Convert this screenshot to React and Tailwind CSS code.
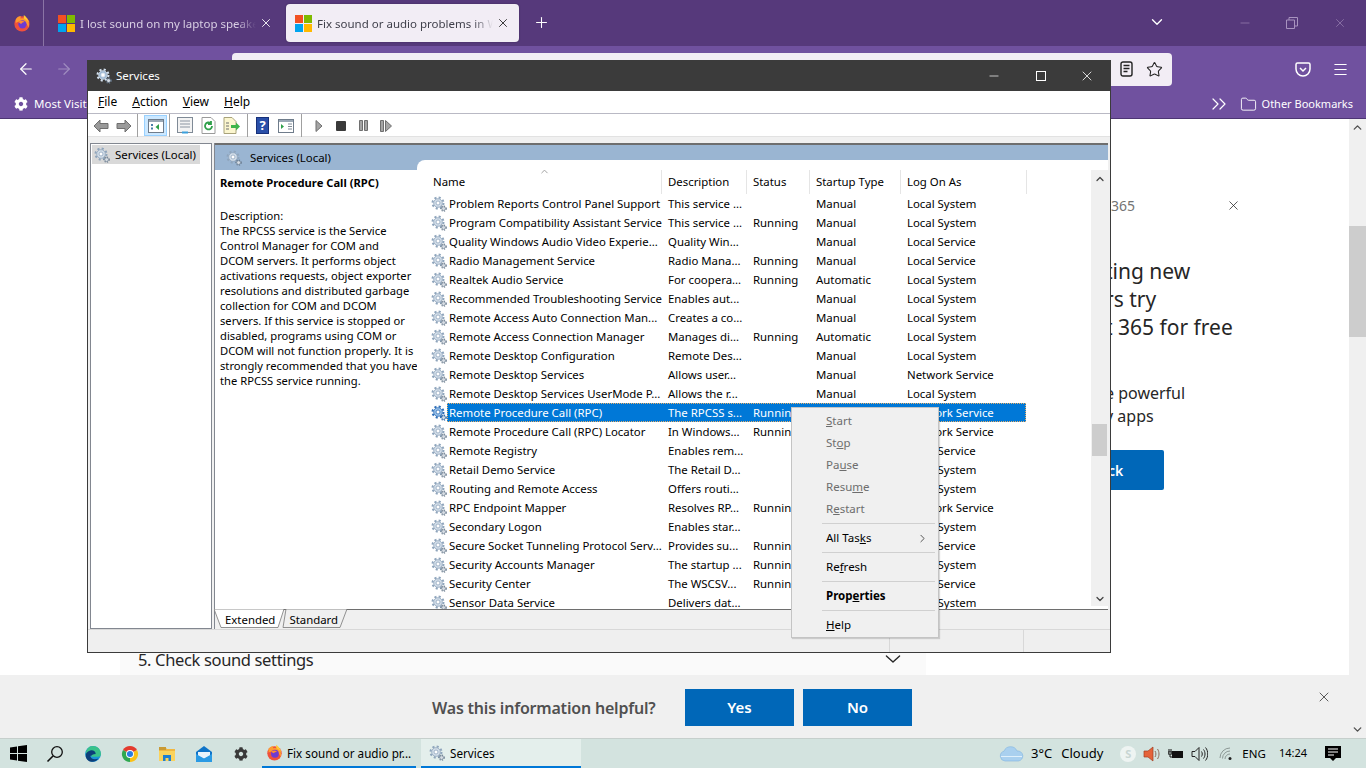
import React from "react";
import { ArrowLeft, ArrowRight, ChevronDown, ChevronRight, ChevronUp, ChevronsRight, Folder, Menu, Minus, Plus, Star, X } from "lucide-react";
import { FaCog } from "react-icons/fa";

// name, description, status, startup type, log on as
const services = [
  ["Problem Reports Control Panel Support", "This service ...", "", "Manual", "Local System"],
  ["Program Compatibility Assistant Service", "This service ...", "Running", "Manual", "Local System"],
  ["Quality Windows Audio Video Experie...", "Quality Win...", "", "Manual", "Local Service"],
  ["Radio Management Service", "Radio Mana...", "Running", "Manual", "Local Service"],
  ["Realtek Audio Service", "For coopera...", "Running", "Automatic", "Local System"],
  ["Recommended Troubleshooting Service", "Enables aut...", "", "Manual", "Local System"],
  ["Remote Access Auto Connection Man...", "Creates a co...", "", "Manual", "Local System"],
  ["Remote Access Connection Manager", "Manages di...", "Running", "Automatic", "Local System"],
  ["Remote Desktop Configuration", "Remote Des...", "", "Manual", "Local System"],
  ["Remote Desktop Services", "Allows user...", "", "Manual", "Network Service"],
  ["Remote Desktop Services UserMode P...", "Allows the r...", "", "Manual", "Local System"],
  ["Remote Procedure Call (RPC)", "The RPCSS s...", "Running", "Automatic", "Network Service"],
  ["Remote Procedure Call (RPC) Locator", "In Windows...", "Running", "Manual", "Network Service"],
  ["Remote Registry", "Enables rem...", "", "Disabled", "Local Service"],
  ["Retail Demo Service", "The Retail D...", "", "Manual", "Local System"],
  ["Routing and Remote Access", "Offers routi...", "", "Disabled", "Local System"],
  ["RPC Endpoint Mapper", "Resolves RP...", "Running", "Automatic", "Network Service"],
  ["Secondary Logon", "Enables star...", "", "Manual", "Local System"],
  ["Secure Socket Tunneling Protocol Serv...", "Provides su...", "Running", "Manual", "Local Service"],
  ["Security Accounts Manager", "The startup ...", "Running", "Automatic", "Local System"],
  ["Security Center", "The WSCSV...", "Running", "Automatic", "Local Service"],
  ["Sensor Data Service", "Delivers dat...", "", "Manual", "Local System"],
];

const description = [
  "The RPCSS service is the Service",
  "Control Manager for COM and",
  "DCOM servers. It performs object",
  "activations requests, object exporter",
  "resolutions and distributed garbage",
  "collection for COM and DCOM",
  "servers. If this service is stopped or",
  "disabled, programs using COM or",
  "DCOM will not function properly. It is",
  "strongly recommended that you have",
  "the RPCSS service running.",
];

const MsLogo = () => (
  <svg width="17" height="17" viewBox="0 0 17 17" className="shrink-0">
    <rect width="8" height="8" fill="#f25022" />
    <rect x="9" width="8" height="8" fill="#7fba00" />
    <rect y="9" width="8" height="8" fill="#00a4ef" />
    <rect x="9" y="9" width="8" height="8" fill="#ffb900" />
  </svg>
);

const FirefoxIcon = ({ size = 18 }) => (
  <svg width={size} height={size} viewBox="0 0 20 20" className="shrink-0">
    <circle cx="10" cy="11" r="8.5" fill="#f0503c" />
    <path d="M3 6C5 3 7 2 9 3c-1 1-1 2 0 2 3-1 7 1 8 4 1 2 1 4 0 6C15 8 9 7 3 10z" fill="#ff9a2e" />
    <path d="M12 1c3 2 5 5 6 9-2-3-4-4-6-5z" fill="#ffcb33" />
    <circle cx="10.5" cy="11.5" r="4.6" fill="#6d3bd1" />
    <path d="M6 9c2-2 5-2 7 0-2 0-3 1-4 2z" fill="#ff8a30" />
  </svg>
);

const ChromeIcon = () => (
  <svg width="18" height="18" viewBox="0 0 20 20">
    <path d="M10 10L2.21 5.5A9 9 0 0 1 17.79 5.5Z" fill="#e33b2e" />
    <path d="M10 10L17.79 5.5A9 9 0 0 1 10 19Z" fill="#fbc116" />
    <path d="M10 10L10 19A9 9 0 0 1 2.21 5.5Z" fill="#2fa84f" />
    <circle cx="10" cy="10" r="4.4" fill="#fff" />
    <circle cx="10" cy="10" r="3.4" fill="#2a7de1" />
  </svg>
);

const EdgeIcon = () => (
  <svg width="18" height="18" viewBox="0 0 20 20">
    <circle cx="10" cy="10" r="8.8" fill="#1a94d8" />
    <path d="M2 12C2 6 7 4 11 5c4 1 6 4 5 7H7c0 3 4 5 9 3-2 3-5 4-8 3.600C4 18 2 15 2 12z" fill="#0c3f7a" />
    <path d="M10 1.200c5 0 8.800 4 8.800 8.800 0 2-1 3-3 3H8c0-2 2-3 5-3 0-3-3-5-6-4C5 6.500 3 8 2 10 2 5 5.500 1.200 10 1.200z" fill="#39c28a" />
  </svg>
);

const ExplorerIcon = () => (
  <svg width="18" height="18" viewBox="0 0 18 18">
    <path d="M1 2h6l2 2h8v12H1z" fill="#f2b73f" />
    <rect x="1" y="2" width="7" height="3" fill="#c99a35" />
    <rect x="1" y="6" width="16" height="10" fill="#fbd35c" />
    <path d="M5 10h8v6h-2.500v-3h-3v3H5z" fill="#1f7fd1" />
  </svg>
);

const MailIcon = () => (
  <svg width="18" height="18" viewBox="0 0 18 18">
    <path d="M1 7l8-6 8 6v10H1z" fill="#0f74c8" />
    <path d="M3 7h12v4l-6 3-6-3z" fill="#eaf4fb" />
    <path d="M1 9l8 4.500L17 9v8H1z" fill="#2a9ae4" />
  </svg>
);

const WinLogo = () => (
  <svg width="17" height="17" viewBox="0 0 17 17">
    <path d="M0 2.500l7-1v6.500H0zM8 1.300L17 0v8H8zM0 9h7v6.500l-7-1zM8 9h9v8l-9-1.300z" fill="#000" />
  </svg>
);

const SearchIcon = () => (
  <svg width="18" height="18" viewBox="0 0 18 18" fill="none" stroke="#111" strokeWidth="1.300">
    <circle cx="11" cy="7" r="5.300" />
    <path d="M7 11l-5.500 5.500" strokeWidth="1.600" />
  </svg>
);

// the two blue gears that mmc uses for services
const GearIcon = ({ size = 16, selected = false, light = false }) => {
  const edge = selected ? "#2f6fb8" : light ? "#d5e2ef" : "#8fa5bc";
  const fill = selected ? "#9cc3ea" : light ? "#9fb9d3" : "#d3dee9";
  const small = selected ? "#1f5c9e" : "#66788c";
  return (
    <svg width={size} height={size} viewBox="0 0 16 16" className="shrink-0">
      <circle cx="7" cy="7" r="5.500" fill="none" stroke={edge} strokeWidth="2" strokeDasharray="2.100 2.220" />
      <circle cx="7" cy="7" r="4.300" fill={fill} stroke={edge} strokeWidth="0.800" />
      <circle cx="7" cy="7" r="2" fill="#fff" stroke={edge} strokeWidth="0.800" />
      <circle cx="12.600" cy="12.600" r="2.600" fill="none" stroke={small} strokeWidth="1.200" strokeDasharray="1.200 1.250" />
      <circle cx="12.600" cy="12.600" r="1.900" fill="#d7dde4" stroke={small} strokeWidth="0.600" />
    </svg>
  );
};

const ToolSep = () => <div className="w-px h-[24px] bg-[#a0a0a0] shrink-0" />;

const NavArrow = ({ flip }) => (
  <svg width="16" height="14" viewBox="0 0 16 14" className={flip ? "scale-x-[-1]" : ""}>
    <path d="M7 1L1 7l6 6V9.500h8v-5H7z" fill="#9a9a9a" stroke="#6f6f6f" strokeWidth="1" />
  </svg>
);

const ConsoleTree = () => (
  <svg width="16" height="14" viewBox="0 0 16 14">
    <rect x="0.500" y="0.500" width="15" height="13" fill="#fff" stroke="#6f7c8b" />
    <rect x="1" y="1" width="14" height="2" fill="#9aa8b6" />
    <path d="M3 5h2v2H3zM3 8.500h2v2H3z" fill="#4a7ea8" />
    <path d="M11 5v6L7.500 8z" fill="#2fa04a" />
  </svg>
);

const Toolbar = () => (
  <div className="h-[21px] flex items-center pt-[1px] border-b border-[#e2e2e2] bg-white box-content">
    <div className="flex items-center pl-[5px] gap-[7px] w-[49px]">
      <NavArrow />
      <NavArrow flip />
    </div>
    <ToolSep />
    <div className="ml-[6px] w-[23px] h-[21px] bg-[#cce8ff] border border-[#99d1ff] flex items-center justify-center">
      <ConsoleTree />
    </div>
    <div className="ml-[2px]"><ToolSep /></div>
    <svg width="16" height="17" viewBox="0 0 16 17" className="ml-[7px]">
      <rect x="0.500" y="0.500" width="15" height="15" fill="#f3f3f3" stroke="#7f8a96" />
      <path d="M3 4h10M3 7h10M3 10h10" stroke="#8b95a1" />
      <rect x="5" y="14.500" width="6" height="2" fill="#3ba0dc" />
    </svg>
    <svg width="15" height="17" viewBox="0 0 15 17" className="ml-[8px]">
      <path d="M1 .5h9l4 4v12H1z" fill="#fff" stroke="#9a9a9a" />
      <path d="M11 9a3.500 3.500 0 1 1-1.200-2.700M10 4v3h-3" fill="none" stroke="#2fa04a" strokeWidth="1.800" />
    </svg>
    <svg width="18" height="17" viewBox="0 0 18 17" className="ml-[7px]">
      <path d="M1 .5h8l4 4v12H1z" fill="#fbf6cf" stroke="#a8a27a" />
      <path d="M3 6h3M3 9h3M3 12h3" stroke="#6f6f6f" />
      <path d="M8 8h5V5.500l4 4-4 4V11H8z" fill="#3fb54a" />
    </svg>
    <div className="ml-[6px]"><ToolSep /></div>
    <div className="ml-[8px] w-[13px] h-[17px] bg-[#2a4fa8] border border-[#16307a] text-white text-[13px] font-bold leading-[15px] text-center">?</div>
    <svg width="16" height="14" viewBox="0 0 16 14" className="ml-[9px]">
      <rect x="0.500" y="0.500" width="15" height="13" fill="#fff" stroke="#6f7c8b" />
      <rect x="1" y="1" width="14" height="2" fill="#9aa8b6" />
      <path d="M3 5l3 2.500L3 10z" fill="#2fa04a" />
      <path d="M10 5h4M10 7.500h4M10 10h4" stroke="#7f8a96" />
    </svg>
    <div className="ml-[7px]"><ToolSep /></div>
    <svg width="8" height="12" viewBox="0 0 8 12" className="ml-[13px]">
      <path d="M1 .5v11L7 6z" fill="#a5a5a5" stroke="#6f6f6f" />
    </svg>
    <div className="ml-[13px] w-[10px] h-[10px] bg-[#3a3a3a] rounded-[1px]" />
    <svg width="9" height="11" viewBox="0 0 9 11" className="ml-[13px]">
      <path d="M.5.500h3v10h-3zM5.500.500h3v10h-3z" fill="#a5a5a5" stroke="#6f6f6f" />
    </svg>
    <svg width="12" height="12" viewBox="0 0 12 12" className="ml-[12px]">
      <path d="M.5.500h3v11h-3zM5.500.500v11L11.500 6z" fill="#a5a5a5" stroke="#6f6f6f" />
    </svg>
  </div>
);

const ServiceRow = ({ row, selected }) => (
  <div className="h-[19px] flex items-center pl-[14px] whitespace-nowrap text-[11.400px]">
    <GearIcon selected={selected} />
    <div
      className={
        selected
          ? "w-[579px] h-[19px] flex items-center bg-[#0078d7] text-white outline-1 outline-dotted outline-[#e8b06a] -outline-offset-1"
          : "w-[579px] h-[19px] flex items-center"
      }
    >
      <div className="w-[221px] pl-[2px]">{row[0]}</div>
      <div className="w-[85px]">{row[1]}</div>
      <div className="w-[63px]">{row[2]}</div>
      <div className="w-[91px]">{row[3]}</div>
      <div>{row[4]}</div>
    </div>
  </div>
);

const MenuItem = ({ children, disabled, bold, arrow }) => (
  <div
    className={`h-[22px] flex items-center justify-between pl-[34px] pr-[9px] text-[11.500px] ${disabled ? "text-[#6d6d6d]" : "text-black"} ${bold ? "font-bold" : ""}`}
  >
    <span>{children}</span>
    {arrow && <ChevronRight size={13} strokeWidth={1.500} className="text-[#333]" />}
  </div>
);

const MenuSep = () => <div className="h-px my-[3px] ml-[30px] mr-[3px] bg-[#d0d0d0]" />;

const ContextMenu = () => (
  <div className="absolute left-[791px] top-[407px] w-[148px] h-[231px] bg-[#f0f0f0] border border-[#c4c4c4] pt-[2px] shadow-[1px_1px_1px_rgba(0,0,0,0.15)]">
    <MenuItem disabled><u>S</u>tart</MenuItem>
    <MenuItem disabled>St<u>o</u>p</MenuItem>
    <MenuItem disabled>Pa<u>u</u>se</MenuItem>
    <MenuItem disabled>Resu<u>m</u>e</MenuItem>
    <MenuItem disabled>R<u>e</u>start</MenuItem>
    <MenuSep />
    <MenuItem arrow>All Tas<u>k</u>s</MenuItem>
    <MenuSep />
    <MenuItem>Re<u>f</u>resh</MenuItem>
    <MenuSep />
    <MenuItem bold>Prop<u>e</u>rties</MenuItem>
    <MenuSep />
    <MenuItem><u>H</u>elp</MenuItem>
  </div>
);

const ServicesWindow = () => (
  <div className="absolute left-[87px] top-[60px] w-[1024px] h-[593px] flex flex-col border border-[#3b3b3b] bg-white text-black">
    <div className="h-[30px] shrink-0 bg-[#3b3b3b] flex items-center text-white">
      <div className="ml-[8px]"><GearIcon light /></div>
      <span className="ml-[4px] text-[11.500px]">Services</span>
      <div className="ml-auto flex items-center">
        <Minus size={14} strokeWidth={1.200} className="mr-[35px]" />
        <div className="w-[10px] h-[10px] border border-white mr-[33px]" />
        <X size={16} strokeWidth={1.200} className="mr-[15px]" />
      </div>
    </div>
    <div className="h-[23px] shrink-0 flex items-center gap-[15px] pl-[10px] text-[12px] border-b border-[#b9b9c4]">
      <span><u>F</u>ile</span>
      <span><u>A</u>ction</span>
      <span><u>V</u>iew</span>
      <span><u>H</u>elp</span>
    </div>
    <Toolbar />
    <div className="flex-1 min-h-0 flex gap-[2px] pl-[2px] pr-[2px] pt-[6px] bg-[#f0f0f0]">
      <div className="w-[122px] shrink-0 border border-[#828790] bg-white p-px">
        <div className="w-[108px] h-[19px] bg-[#d9d9d9] flex items-center pl-[2px] gap-[5px] text-[11.400px] whitespace-nowrap">
          <GearIcon />
          <span>Services (Local)</span>
        </div>
      </div>
      <div className="flex-1 min-w-0 flex flex-col border-l border-[#828790]">
        <div className="flex-1 min-h-0 flex bg-[#9ab5d2] border-t-2 border-[#6e6e6e]">
          <div className="w-[202px] shrink-0 flex flex-col">
            <div className="h-[25px] shrink-0 flex items-center pl-[11px] gap-[8px] text-[11.400px] whitespace-nowrap">
              <GearIcon />
              <span>Services (Local)</span>
            </div>
            <div className="flex-1 bg-white pl-[5px] text-[11.200px] leading-[15px] whitespace-nowrap overflow-hidden">
              <div className="font-bold pt-[5px]">Remote Procedure Call (RPC)</div>
              <div className="mt-[18px]">Description:</div>
              {description.map((line) => (
                <div key={line}>{line}</div>
              ))}
            </div>
          </div>
          <div className="flex-1 min-w-0 mt-[15px] flex bg-white rounded-tl-[8px] pt-[10px]">
            <div className="flex-1 min-w-0 flex flex-col overflow-hidden">
              <div className="relative h-[24px] shrink-0 flex text-[11.400px] whitespace-nowrap">
                <ChevronUp size={11} strokeWidth={1.200} className="absolute left-[122px] -top-[4px] text-[#555]" />
                <div className="w-[245px] pl-[16px] flex items-center border-r border-[#e5e5e5]">Name</div>
                <div className="w-[85px] pl-[6px] flex items-center border-r border-[#e5e5e5]">Description</div>
                <div className="w-[63px] pl-[6px] flex items-center border-r border-[#e5e5e5]">Status</div>
                <div className="w-[91px] pl-[6px] flex items-center border-r border-[#e5e5e5]">Startup Type</div>
                <div className="w-[126px] pl-[6px] flex items-center border-r border-[#e5e5e5]">Log On As</div>
              </div>
              {services.map((row, i) => (
                <ServiceRow key={row[0]} row={row} selected={i === 11} />
              ))}
            </div>
            <div className="w-[17px] shrink-0 bg-[#f0f0f0] mb-[3px] flex flex-col items-center text-[#444]">
              <ChevronUp size={12} strokeWidth={2.500} className="mt-[3px]" />
              <div className="w-[15px] h-[32px] mt-[239px] bg-[#cdcdcd]" />
              <ChevronDown size={12} strokeWidth={2.500} className="mt-auto mb-[1px]" />
            </div>
          </div>
        </div>
        <div className="relative h-[19px] shrink-0 flex items-center text-[11.400px] border-t border-[#6e6e6e] box-content">
          <svg width="140" height="20" viewBox="0 0 140 20" className="absolute left-[-1px] -top-px">
            <path d="M72 0L69 18.500H126L133 0z" fill="#f0f0f0" stroke="#777" strokeWidth="0.800" />
            <path d="M0 0l7 18.500h57L70 0z" fill="#fff" stroke="#777" strokeWidth="0.800" />
          </svg>
          <span className="relative ml-[10px]">Extended</span>
          <span className="relative ml-[14px]">Standard</span>
        </div>
      </div>
    </div>
    <div className="h-[23px] shrink-0 bg-[#efefef] border-t border-[#d8d8d8] flex justify-end">
      <div className="w-[134px] border-l border-[#d8d8d8]" />
      <div className="w-[87px] border-l border-[#d8d8d8]" />
    </div>
  </div>
);

const Tab = ({ title, active }) => (
  <div
    className={
      active
        ? "w-[233px] h-[38px] mt-[4px] ml-[10px] rounded-[4px] bg-[#f2edf5] text-[#3f3f4a] flex items-center pl-[9px] pr-[9px] shadow-[0_0_2px_rgba(0,0,0,0.3)]"
        : "w-[231px] h-[38px] mt-[4px] text-[#d9cfe4] flex items-center pl-[13px] pr-[3px]"
    }
  >
    <MsLogo />
    <div className="ml-[5px] pt-[1px] flex-1 min-w-0 overflow-hidden whitespace-nowrap text-[11.500px] [mask-image:linear-gradient(to_left,transparent,black_20px)]">{title}</div>
    <X size={14} strokeWidth={1.500} className={active ? "ml-[3px] text-[#222]" : "ml-[3px] text-white"} />
  </div>
);

const Taskbar = () => (
  <div className="h-[30px] shrink-0 bg-[#d3e3df] border-t border-[#c6cfcc] flex items-center text-black text-[11.700px]">
    <div className="w-[262px] shrink-0 flex items-center pl-[10px]">
      <WinLogo />
      <div className="ml-[19px]"><SearchIcon /></div>
      <div className="ml-[20px]"><EdgeIcon /></div>
      <div className="ml-[19px]"><ChromeIcon /></div>
      <div className="ml-[19px]"><ExplorerIcon /></div>
      <div className="ml-[19px]"><MailIcon /></div>
      <FaCog size={14} className="ml-[21px] text-[#3a3a3a]" />
    </div>
    <div className="w-[154px] h-[29px] shrink-0 border-b-2 border-[#0078d7] flex items-center pl-[4px] gap-[3px] whitespace-nowrap">
      <FirefoxIcon size={17} />
      <span className="ml-[1px] pt-[2px]">Fix sound or audio pr...</span>
    </div>
    <div className="ml-[5px] w-[160px] h-[29px] shrink-0 bg-[#e4efec] border-b-2 border-[#0078d7] flex items-center pl-[8px] gap-[5px]">
      <GearIcon />
      <span className="pt-[2px]">Services</span>
    </div>
    <div className="ml-auto flex items-center">
      <svg width="25" height="17" viewBox="0 0 25 17">
        <path d="M6 16a5 5 0 0 1-1-9.800A7 7 0 0 1 18 6a5 5 0 0 1 1.500 10z" fill="#a9d0ef" stroke="#7fb4e0" strokeWidth="0.600" />
        <path d="M2 11h21v1H2z" fill="#dff0fb" />
      </svg>
      <span className="ml-[7px] text-[13px]">3°C</span>
      <span className="ml-[9px] text-[13px]">Cloudy</span>
      <div className="ml-[17px] w-[16px] h-[16px] rounded-full bg-[#eef4f2] text-[#c9d6d2] text-[11px] font-bold leading-[16px] text-center">S</div>
      <svg width="17" height="16" viewBox="0 0 17 16" className="ml-[7px]">
        <path d="M1 5h4l5-4v14l-5-4H1z" fill="#e5633a" stroke="#a33c20" strokeWidth="0.700" />
        <path d="M12 5c1.200 2 1.200 4 0 6M14.500 3c2 3 2 7 0 10" fill="none" stroke="#8a6a5a" />
      </svg>
      <svg width="16" height="14" viewBox="0 0 16 14" className="ml-[8px]">
        <rect x="4" y="4" width="11" height="7" fill="#111" />
        <path d="M1 2v3M3 2v3M0 5h4v2H0zM2 7v3h2" stroke="#111" fill="none" />
      </svg>
      <svg width="17" height="16" viewBox="0 0 17 16" fill="none" stroke="#222" className="ml-[7px]">
        <path d="M1 5.500h3l4-4v13l-4-4H1z" />
        <path d="M10.500 5.500c1 1.500 1 3.500 0 5M12.500 3.500c2 2.500 2 6.500 0 9M14.500 1.500c3 3.500 3 9.500 0 13" />
      </svg>
      <svg width="14" height="14" viewBox="0 0 14 14" fill="none" stroke="#8c9895" className="ml-[11px]">
        <path d="M1 11a10 10 0 0 1 10-10M3.500 11.500A7.500 7.500 0 0 1 11 4M6 12a5 5 0 0 1 5-5" />
        <circle cx="11" cy="11.500" r="1.500" fill="#222" stroke="none" />
      </svg>
      <span className="ml-[9px] text-[11.500px]">ENG</span>
      <span className="ml-[13px] text-[11px]">14:24</span>
      <svg width="16" height="16" viewBox="0 0 16 16" className="ml-[18px] mr-[25px]">
        <path d="M0 0h16v12h-5l-3 3-3-3H0z" fill="#000" />
        <path d="M3 3h10M3 6h10M3 9h6" stroke="#fff" />
      </svg>
    </div>
  </div>
);

export default function App() {
  return (
    <div className="relative w-[1366px] h-[768px] overflow-hidden flex flex-col bg-white font-['Noto_Sans',sans-serif] text-[#262626]">
      {/* tab strip */}
      <div className="h-[46px] shrink-0 bg-[#56397b] flex text-white">
        <div className="w-[44px] h-[46px] shrink-0 flex items-center justify-center border-r border-[#8a74a5]">
          <FirefoxIcon />
        </div>
        <div className="pl-[1px] flex">
          <Tab title="I lost sound on my laptop speakers" />
          <Tab title="Fix sound or audio problems in Windows" active />
        </div>
        <Plus size={17} strokeWidth={1.500} className="ml-[14px] mt-[14px]" />
        <ChevronDown size={18} strokeWidth={1.800} className="ml-[598px] mt-[13px]" />
        <Minus size={14} strokeWidth={1} className="ml-[72px] mt-[16px] text-[#a893bf]" />
        <svg width="12" height="12" viewBox="0 0 12 12" fill="none" stroke="#a893bf" className="ml-[34px] mt-[17px]">
          <path d="M.5 3h8v8.500h-8zM3 3V.5h8.500V9H9" />
        </svg>
        <X size={14} strokeWidth={1} className="ml-[35px] mt-[16px] text-[#a893bf]" />
      </div>
      {/* nav bar */}
      <div className="h-[46px] shrink-0 bg-[#70519f] flex items-center text-white">
        <ArrowLeft size={18} strokeWidth={1.600} className="ml-[17px]" />
        <ArrowRight size={18} strokeWidth={1.600} className="ml-[20px] text-[#9f8cbf]" />
        <div className="ml-[159px] w-[940px] h-[33px] rounded-[4px] bg-[#f2edf5] flex items-center pl-[8px] pr-[9px] gap-[13px] text-[#222]">
          <svg width="16" height="18" viewBox="0 0 16 18" fill="#222">
            <path d="M8 0l7 3v6c0 4-3 7-7 9-4-2-7-5-7-9V3z" />
          </svg>
          <svg width="14" height="18" viewBox="0 0 14 18" fill="#222" className="ml-[3px]">
            <path d="M2 8V5a5 5 0 0 1 10 0v3h2v10H0V8z" />
          </svg>
          <svg width="13" height="16" viewBox="0 0 13 16" fill="none" stroke="#222" strokeWidth="1.400" className="ml-auto">
            <rect x="1" y="1" width="11" height="14" rx="2" />
            <path d="M3.500 4.500h6M3.500 7.500h6M3.500 10.500h4" />
          </svg>
          <Star size={17} strokeWidth={1.500} />
        </div>
        <svg width="16" height="15" viewBox="0 0 16 15" fill="none" stroke="#fff" strokeWidth="1.500" className="ml-[123px]">
          <path d="M1 2.500a1.500 1.500 0 0 1 1.500-1.500h11A1.500 1.500 0 0 1 15 2.500V7a7 7 0 0 1-14 0z" />
          <path d="M5 6l3 3 3-3" />
        </svg>
        <Menu size={17} strokeWidth={1.500} className="ml-[21px]" />
      </div>
      {/* bookmarks */}
      <div className="h-[27px] shrink-0 bg-[#70519f] border-b border-[#4d3573] flex items-center pb-[2px] text-white text-[11.500px]">
        <FaCog size={14} className="ml-[14px]" />
        <span className="ml-[6px]">Most Visited</span>
        <ChevronsRight size={24} strokeWidth={1.200} className="ml-auto" />
        <Folder size={17} strokeWidth={1.300} className="ml-[9px]" />
        <span className="ml-[5px] mr-[13px] text-[11px]">Other Bookmarks</span>
      </div>
      {/* page */}
      <div className="flex-1 min-h-0 flex">
        <div className="flex-1 min-w-0 flex flex-col">
          <div className="flex-1 min-h-0 pl-[1105px] pt-[77px] overflow-hidden">
            <div className="w-[136px] h-[18px] flex items-center justify-between text-[14px] text-[#737373]">
              <span className="pl-[6px]">365</span>
              <X size={15} strokeWidth={1.200} className="text-[#222]" />
            </div>
            <div className="mt-[43px] text-[21px] leading-[28px] whitespace-nowrap">
              <div>ting new</div>
              <div>rs try</div>
              <div>t 365 for free</div>
            </div>
            <div className="mt-[41px] text-[16px] leading-[23px] whitespace-nowrap">
              <div>e powerful</div>
              <div>y apps</div>
            </div>
            <div className="mt-[22px] w-[59px] h-[40px] bg-[#0067b8] rounded-[2px] flex items-center pl-[3px] text-white text-[14px] font-semibold">ck</div>
          </div>
          <div className="h-[35px] shrink-0 ml-[120px] w-[806px] bg-[#fafafa] flex justify-between pl-[18px] pr-[21px] pt-[8px]">
            <span className="text-[16.500px] leading-[24px] tracking-[-0.35px]">5. Check sound settings</span>
            <ChevronDown size={24} strokeWidth={1.200} className="-mt-[1px] scale-x-[1.100]" />
          </div>
          <div className="h-[63px] shrink-0 bg-[#f0f0f0] flex items-center pl-[432px] pt-[2px]">
            <span className="w-[253px] text-[16px] tracking-[-0.2px] font-semibold text-[#505050] whitespace-nowrap">Was this information helpful?</span>
            <div className="w-[109px] h-[37px] bg-[#0067b8] text-white text-[15px] font-semibold flex items-center justify-center">Yes</div>
            <div className="ml-[9px] w-[109px] h-[37px] bg-[#0067b8] text-white text-[15px] font-semibold flex items-center justify-center">No</div>
            <X size={16} strokeWidth={1.200} className="ml-[404px] -mt-[21px] text-[#333]" />
          </div>
        </div>
        <div className="w-[17px] shrink-0 bg-[#f0f0f0] flex flex-col items-center text-[#505050]">
          <ChevronUp size={13} strokeWidth={2.500} className="mt-[2px]" />
          <div className="w-[17px] h-[111px] mt-[92px] bg-[#cdcdcd]" />
          <ChevronDown size={13} strokeWidth={2.500} className="mt-auto mb-[2px]" />
        </div>
      </div>
      <Taskbar />
      <ServicesWindow />
      <ContextMenu />
    </div>
  );
}
